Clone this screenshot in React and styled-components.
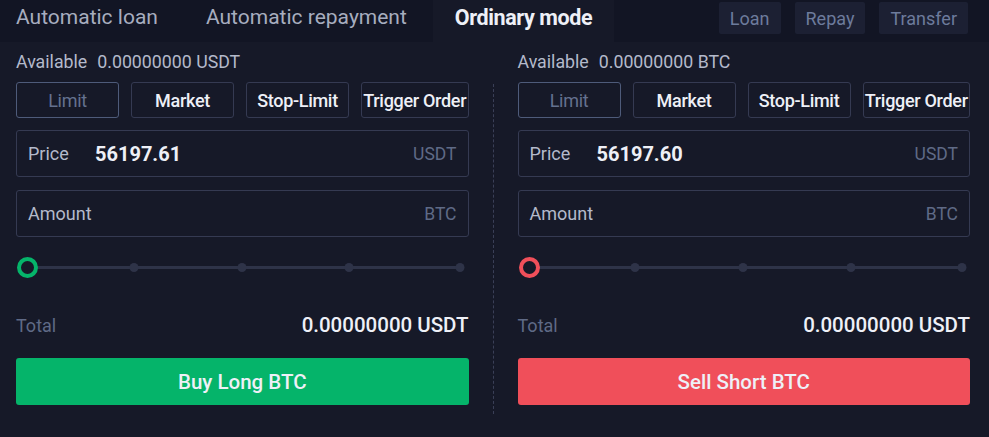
import React from 'react'
import styled, { createGlobalStyle } from 'styled-components'

const GlobalStyle = createGlobalStyle`
  html, body {
    margin: 0;
    padding: 0;
    background: #161928;
    font-family: Roboto, "Liberation Sans", sans-serif;
  }
`

const Page = styled.div`
  width: 989px;
  height: 437px;
  background: #161928;
  overflow: hidden;
`

const TopBar = styled.div`
  display: flex;
  align-items: stretch;
  height: 42px;
  background: #121524;
`

const Tab = styled.div`
  display: flex;
  align-items: center;
  padding: 0 ${({ $right }) => $right}px 8px ${({ $left }) => $left}px;
  font-size: ${({ $active }) => ($active ? 21.5 : 21)}px;
  color: ${({ $active }) => ($active ? '#eef0f7' : '#a7adbf')};
  font-weight: ${({ $active }) => ($active ? 700 : 400)};
  background: ${({ $active }) => ($active ? '#161928' : 'transparent')};
  letter-spacing: ${({ $active }) => ($active ? '-0.4px' : '0')};
`

const Actions = styled.div`
  margin-left: auto;
  display: flex;
  align-items: flex-start;
  gap: 14px;
  padding: 2px 21px 0 0;
`

const ActionButton = styled.div`
  display: flex;
  align-items: center;
  justify-content: center;
  height: 32px;
  padding: 0 11px;
  background: #1c2033;
  color: #6d7b9c;
  font-size: 18px;
  border-radius: 2px;
`

const Body = styled.div`
  display: grid;
  grid-template-columns: 1fr 1px 1fr;
  column-gap: 24px;
  padding: 9px 19px 0 16px;
`

const Divider = styled.div`
  margin-top: 33px;
  height: 330px;
  border-left: 1px dashed #3a3f57;
`

const Panel = styled.div`
  display: flex;
  flex-direction: column;
`

const Available = styled.div`
  font-size: 17.75px;
  color: #b4bacb;
  height: 22px;
  display: flex;
  gap: 10px;
  align-items: center;
`

const TypeRow = styled.div`
  display: grid;
  grid-template-columns: 103px 103px 103px 1fr;
  gap: 12px;
  margin-top: 9px;
`

const TypeButton = styled.div`
  height: 34px;
  display: flex;
  align-items: center;
  justify-content: center;
  border: 1px solid ${({ $active }) => ($active ? '#4e5b7a' : '#353a52')};
  border-radius: 3px;
  font-size: 18px;
  color: ${({ $active }) => ($active ? '#64718f' : '#eef0f7')};
  font-weight: ${({ $active }) => ($active ? 400 : 500)};
  white-space: nowrap;
  letter-spacing: -0.3px;
`

const Field = styled.div`
  height: 45px;
  margin-top: ${({ $mt }) => $mt}px;
  border: 1px solid #353a52;
  border-radius: 3px;
  display: flex;
  align-items: center;
  padding: 0 11px;
`

const FieldLabel = styled.span`
  font-size: 18px;
  color: #b4bacb;
  width: 67px;
`

const FieldValue = styled.span`
  font-size: 20px;
  font-weight: 700;
  color: #eef0f7;
`

const FieldUnit = styled.span`
  margin-left: auto;
  font-size: 17.5px;
  color: #5f6a86;
`

const SliderRow = styled.div`
  position: relative;
  height: 20px;
  margin: 20px 0 0;
`

const Track = styled.div`
  position: absolute;
  left: 10px;
  right: 6px;
  top: 9px;
  height: 3px;
  background: #2e3348;
`

const Tick = styled.div`
  position: absolute;
  top: 6px;
  width: 9px;
  height: 9px;
  border-radius: 50%;
  background: #2e3348;
  transform: translateX(-50%);
`

const Handle = styled.div`
  position: absolute;
  left: 1px;
  top: 0;
  width: 13px;
  height: 13px;
  border-radius: 50%;
  border: 4px solid ${({ $color }) => $color};
  background: #161928;
`

const TotalRow = styled.div`
  display: flex;
  align-items: center;
  justify-content: space-between;
  margin-top: 36px;
  height: 24px;
`

const TotalLabel = styled.span`
  font-size: 18px;
  color: #5f6a86;
`

const TotalValue = styled.span`
  font-size: 20.5px;
  font-weight: 500;
  color: #eef0f7;
`

const Submit = styled.div`
  margin-top: 21px;
  height: 47px;
  border-radius: 3px;
  background: ${({ $color }) => $color};
  display: flex;
  align-items: center;
  justify-content: center;
  font-size: 20.5px;
  font-weight: 500;
  color: #eef0f7;
`

const tickPositions = ['26%', '49.9%', '73.7%', '98.2%']

const OrderPanel = ({ asset, available, price, color, action }) => (
  <Panel>
    <Available>
      <span>Available</span>
      <span>{available}</span>
    </Available>
    <TypeRow>
      <TypeButton $active>Limit</TypeButton>
      <TypeButton>Market</TypeButton>
      <TypeButton>Stop-Limit</TypeButton>
      <TypeButton>Trigger Order</TypeButton>
    </TypeRow>
    <Field $mt={12}>
      <FieldLabel>Price</FieldLabel>
      <FieldValue>{price}</FieldValue>
      <FieldUnit>USDT</FieldUnit>
    </Field>
    <Field $mt={13}>
      <FieldLabel>Amount</FieldLabel>
      <FieldUnit>{asset}</FieldUnit>
    </Field>
    <SliderRow>
      <Track />
      {tickPositions.map((p) => (
        <Tick key={p} style={{ left: p }} />
      ))}
      <Handle $color={color} />
    </SliderRow>
    <TotalRow>
      <TotalLabel>Total</TotalLabel>
      <TotalValue>0.00000000 USDT</TotalValue>
    </TotalRow>
    <Submit $color={color}>{action}</Submit>
  </Panel>
)

const App = () => (
  <Page>
    <GlobalStyle />
    <TopBar>
      <Tab $left={16} $right={24}>Automatic loan</Tab>
      <Tab $left={24} $right={26}>Automatic repayment</Tab>
      <Tab $active $left={22} $right={22}>Ordinary mode</Tab>
      <Actions>
        <ActionButton>Loan</ActionButton>
        <ActionButton>Repay</ActionButton>
        <ActionButton>Transfer</ActionButton>
      </Actions>
    </TopBar>
    <Body>
      <OrderPanel
        asset="BTC"
        available="0.00000000 USDT"
        price="56197.61"
        color="#05b46a"
        action="Buy Long BTC"
      />
      <Divider />
      <OrderPanel
        asset="BTC"
        available="0.00000000 BTC"
        price="56197.60"
        color="#f04f5a"
        action="Sell Short BTC"
      />
    </Body>
  </Page>
)

export default App
